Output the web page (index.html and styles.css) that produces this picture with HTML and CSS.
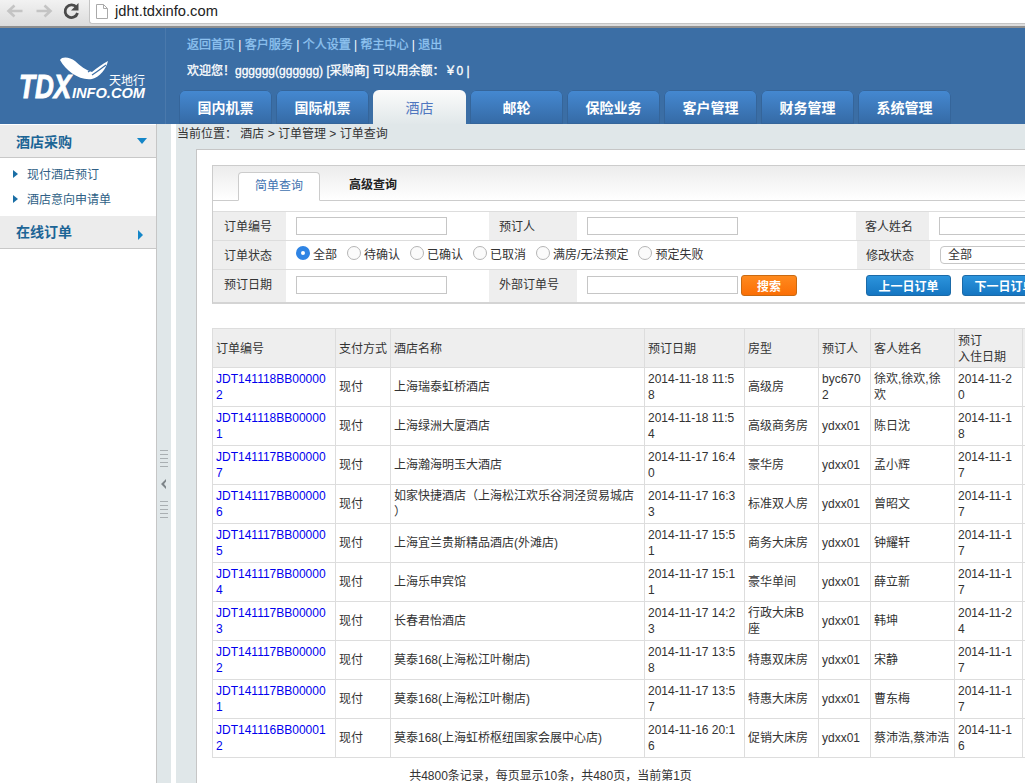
FILE: index.html
```html
<!doctype html>
<html>
<head>
  <meta charset="utf-8">
  <title>jdht.tdxinfo.com</title>
  <link rel="stylesheet" href="styles.css">
</head>

<body>

  <div class="browserBar">
    <svg class="navIcons" width="88" height="26" viewBox="0 0 88 26">
      <path d="M22 11H9M14 5.500L8 11l6 5.500" fill="none" stroke="#c4c4c4" stroke-width="2.600"/>
      <path d="M36 11h13M44 5.500l6 5.500-6 5.500" fill="none" stroke="#c4c4c4" stroke-width="2.600"/>
      <path d="M76 7.500A6.300 6.300 0 1 0 77 13" fill="none" stroke="#4a4a4a" stroke-width="2.800"/>
      <path d="M78 3v7.500h-7.500z" fill="#4a4a4a"/>
    </svg>
    <div class="addressBar">
      <svg width="12" height="15" viewBox="0 0 12 15">
        <path d="M.5.500h7l4 4v10H.500zM7.500.500v4h4" fill="#fff" stroke="#aaa"/>
      </svg>
      <span>jdht.tdxinfo.com</span>
    </div>
  </div>

  <div class="header">
    <div class="logo">
      <svg width="165" height="96" viewBox="0 0 165 96">
        <path d="M60 32C62 28 70 29 75 33 80 38 86 42 92 44 97 40 102 36 108 33 106 41 100 49 92 51 80 53 66 43 60 32z" fill="#fff"/>
        <path d="M92 47C97 44 102 40 106 37M88 44C93 41 98 37 102 35" fill="none" stroke="#3b6ea5" stroke-width="1.200"/>
        <text x="19" y="70" class="logoBig" textLength="52" lengthAdjust="spacingAndGlyphs">TDX</text>
        <text x="72" y="70" class="logoSmall" textLength="73" lengthAdjust="spacingAndGlyphs">INFO.COM</text>
        <text x="109" y="57" class="logoCn" textLength="36">天地行</text>
      </svg>
    </div>
    <div class="headerRight">
      <div class="topLinks">
        <a href="#">返回首页</a> | <a href="#">客户服务</a> | <a href="#">个人设置</a> | <a href="#">帮主中心</a> | <a href="#">退出</a>
      </div>
      <div class="welcome">欢迎您！gggggg(gggggg) [采购商] 可以用余额：￥0 |</div>
      <div class="mainTabs">
        <a class="mainTab" href="#">国内机票</a>
        <a class="mainTab" href="#">国际机票</a>
        <a class="mainTab current" href="#">酒店</a>
        <a class="mainTab" href="#">邮轮</a>
        <a class="mainTab" href="#">保险业务</a>
        <a class="mainTab" href="#">客户管理</a>
        <a class="mainTab" href="#">财务管理</a>
        <a class="mainTab" href="#">系统管理</a>
      </div>
    </div>
  </div>

  <div class="body">
    <div class="sidebar">
      <div class="sideTitle">酒店采购 <span class="arrowDown"></span></div>
      <ul class="sideList">
        <li><span class="arrowSmall"></span>现付酒店预订</li>
        <li><span class="arrowSmall"></span>酒店意向申请单</li>
      </ul>
      <div class="sideTitle second">在线订单 <span class="arrowRight"></span></div>
    </div>

    <div class="splitter">
      <span class="grip"></span>
      <svg width="6" height="10" viewBox="0 0 6 10"><path d="M5 0L0 5l5 5V7.500L3 5l2-2.500z" fill="#7d8488"/></svg>
      <span class="grip"></span>
    </div>

    <div class="content">
      <div class="breadcrumb">当前位置： 酒店 &gt; 订单管理 &gt; 订单查询</div>
      <div class="panel">

        <div class="searchForm">
          <div class="formTabs">
            <span class="formTab active">简单查询</span>
            <span class="formTab">高级查询</span>
          </div>
          <div class="formGap"></div>
          <div class="formRow">
            <label>订单编号</label>
            <div class="field"><input type="text"></div>
            <label class="wide">预订人</label>
            <div class="field long"><input type="text"></div>
            <label class="end">客人姓名</label>
            <div class="field"><input type="text"></div>
          </div>
          <div class="formRow">
            <label>订单状态</label>
            <div class="radios">
              <span class="radio on"></span><span class="radioText">全部</span>
              <span class="radio"></span><span class="radioText">待确认</span>
              <span class="radio"></span><span class="radioText">已确认</span>
              <span class="radio"></span><span class="radioText">已取消</span>
              <span class="radio"></span><span class="radioText">满房/无法预定</span>
              <span class="radio"></span><span class="radioText">预定失败</span>
            </div>
            <label class="end">修改状态</label>
            <div class="field"><span class="selectBox">全部</span></div>
          </div>
          <div class="formRow last">
            <label>预订日期</label>
            <div class="field"><input type="text"></div>
            <label class="wide">外部订单号</label>
            <div class="field long actions">
              <input type="text">
              <button class="btnSearch">搜索</button>
              <button class="btnDay">上一日订单</button>
              <button class="btnDay">下一日订单</button>
            </div>
          </div>
        </div>

        <table class="orders">
          <colgroup>
            <col class="c1"><col class="c2"><col class="c3"><col class="c4"><col class="c5">
            <col class="c6"><col class="c7"><col class="c8"><col class="c9">
          </colgroup>
          <tr>
            <th>订单编号</th><th>支付方式</th><th>酒店名称</th><th>预订日期</th><th>房型</th><th>预订人</th><th>客人姓名</th><th>预订<br>入住日期</th><th></th>
          </tr>
          <tr>
            <td><a href="#">JDT141118BB000002</a></td><td>现付</td><td>上海瑞泰虹桥酒店</td><td>2014-11-18 11:58</td><td>高级房</td><td>byc6702</td><td>徐欢,徐欢,徐欢</td><td>2014-11-20</td><td></td>
          </tr>
          <tr>
            <td><a href="#">JDT141118BB000001</a></td><td>现付</td><td>上海绿洲大厦酒店</td><td>2014-11-18 11:54</td><td>高级商务房</td><td>ydxx01</td><td>陈日沈</td><td>2014-11-18</td><td></td>
          </tr>
          <tr>
            <td><a href="#">JDT141117BB000007</a></td><td>现付</td><td>上海瀚海明玉大酒店</td><td>2014-11-17 16:40</td><td>豪华房</td><td>ydxx01</td><td>孟小辉</td><td>2014-11-17</td><td></td>
          </tr>
          <tr>
            <td><a href="#">JDT141117BB000006</a></td><td>现付</td><td>如家快捷酒店（上海松江欢乐谷洞泾贸易城店）</td><td>2014-11-17 16:33</td><td>标准双人房</td><td>ydxx01</td><td>曾昭文</td><td>2014-11-17</td><td></td>
          </tr>
          <tr>
            <td><a href="#">JDT141117BB000005</a></td><td>现付</td><td>上海宜兰贵斯精品酒店(外滩店)</td><td>2014-11-17 15:51</td><td>商务大床房</td><td>ydxx01</td><td>钟耀轩</td><td>2014-11-17</td><td></td>
          </tr>
          <tr>
            <td><a href="#">JDT141117BB000004</a></td><td>现付</td><td>上海乐申宾馆</td><td>2014-11-17 15:11</td><td>豪华单间</td><td>ydxx01</td><td>薛立新</td><td>2014-11-17</td><td></td>
          </tr>
          <tr>
            <td><a href="#">JDT141117BB000003</a></td><td>现付</td><td>长春君怡酒店</td><td>2014-11-17 14:23</td><td>行政大床B座</td><td>ydxx01</td><td>韩坤</td><td>2014-11-24</td><td></td>
          </tr>
          <tr>
            <td><a href="#">JDT141117BB000002</a></td><td>现付</td><td>莫泰168(上海松江叶榭店)</td><td>2014-11-17 13:58</td><td>特惠双床房</td><td>ydxx01</td><td>宋静</td><td>2014-11-17</td><td></td>
          </tr>
          <tr>
            <td><a href="#">JDT141117BB000001</a></td><td>现付</td><td>莫泰168(上海松江叶榭店)</td><td>2014-11-17 13:57</td><td>特惠大床房</td><td>ydxx01</td><td>曹东梅</td><td>2014-11-17</td><td></td>
          </tr>
          <tr>
            <td><a href="#">JDT141116BB000012</a></td><td>现付</td><td>莫泰168(上海虹桥枢纽国家会展中心店)</td><td>2014-11-16 20:16</td><td>促销大床房</td><td>ydxx01</td><td>蔡沛浩,蔡沛浩</td><td>2014-11-16</td><td></td>
          </tr>
        </table>

        <div class="pager">共4800条记录，每页显示10条，共480页，当前第1页</div>
      </div>
    </div>
  </div>

</body>

</html>
```

FILE: styles.css
```css
html, body {
  margin: 0;
  height: 783px;
  overflow: hidden;
}
body {
  width: 1025px;
  background-color: #ffffff;
  color: #333333;
  font-family: "Liberation Sans", "Noto Sans CJK SC", sans-serif;
  font-size: 12px;
}

/* browser toolbar */
.browserBar {
  display: flex;
  height: 28px;
  box-sizing: border-box;
  background-image: linear-gradient(to bottom, #f2f2f2, #dcdcdc);
  border-bottom: 2px solid #8f8f8f;
}
.navIcons {
  width: 89px;
  flex: none;
}
.addressBar {
  flex: 1;
  display: flex;
  align-items: center;
  gap: 7px;
  height: 24px;
  box-sizing: border-box;
  padding: 0 0 1px 6px;
  background-color: #ffffff;
  border-left: 1px solid #c4c4c4;
  border-bottom: 1px solid #c4c4c4;
  border-bottom-left-radius: 3px;
  color: #222222;
  font-size: 14.700px;
}

/* blue header */
.header {
  display: flex;
  height: 96px;
  background-color: #3b6ea5;
}
.logo {
  width: 165px;
  flex: none;
  border-right: 1px solid #4a79ac;
}
.logoBig {
  fill: #ffffff;
  stroke: #ffffff;
  stroke-width: 1;
  font-size: 33px;
  font-weight: bold;
  font-style: italic;
}
.logoSmall {
  fill: #ffffff;
  font-size: 14px;
  font-weight: bold;
  font-style: italic;
}
.logoCn {
  fill: #ffffff;
  font-size: 12px;
}
.headerRight {
  padding-left: 13px;
  flex: 1;
}
.topLinks {
  height: 16px;
  margin-top: 9px;
  padding-left: 8px;
  line-height: 16px;
  color: #ffffff;
}
.topLinks a {
  color: #8fc3f0;
  text-decoration: none;
  -webkit-text-stroke: 0.300px #8fc3f0;
}
.welcome {
  height: 16px;
  margin-top: 10px;
  padding-left: 8px;
  line-height: 16px;
  color: #ffffff;
  -webkit-text-stroke: 0.300px #ffffff;
}
.mainTabs {
  display: flex;
  gap: 4px;
  margin-top: 11px;
}
.mainTab {
  width: 93px;
  height: 34px;
  line-height: 36px;
  text-align: center;
  color: #ffffff;
  font-size: 14px;
  font-weight: bold;
  text-decoration: none;
  border-radius: 6px 6px 0 0;
  background-image: linear-gradient(to bottom, #4589d2, #356aa5);
  box-shadow: 0 0 0 1px #35659a inset;
}
.mainTab.current {
  color: #4f76bf;
  font-weight: normal;
  background-image: linear-gradient(to bottom, #fbfbfb, #e1e8ea);
  box-shadow: none;
}

/* layout under the header */
.body {
  display: flex;
  height: 659px;
}
.sidebar {
  width: 156px;
  flex: none;
  padding-top: 1px;
  border-right: 1px solid #c6c6c6;
}
.sideTitle {
  display: flex;
  justify-content: space-between;
  align-items: center;
  height: 33px;
  box-sizing: border-box;
  padding: 0 9px 0 16px;
  background-color: #ececec;
  border-bottom: 1px solid #c8c8c8;
  color: #1c6596;
  font-size: 14px;
  font-weight: bold;
}
.sideTitle.second {
  margin-top: 5px;
  padding-right: 13px;
  padding-bottom: 2px;
}
.arrowDown {
  border-left: 5px solid transparent;
  border-right: 5px solid transparent;
  border-top: 6px solid #1486c8;
}
.arrowRight {
  margin-top: 7px;
  border-top: 5px solid transparent;
  border-bottom: 5px solid transparent;
  border-left: 5px solid #1486c8;
}
.sideList {
  margin: 0;
  padding: 3px 0 0 13px;
  list-style: none;
}
.sideList li {
  display: flex;
  align-items: center;
  height: 25px;
  color: #2f5f86;
}
.arrowSmall {
  margin-right: 9px;
  border-top: 4px solid transparent;
  border-bottom: 4px solid transparent;
  border-left: 5px solid #1a6ea5;
}
.splitter {
  width: 14px;
  flex: none;
  box-sizing: border-box;
  margin-right: 5px;
  display: flex;
  flex-direction: column;
  align-items: center;
  justify-content: center;
  gap: 12px;
  padding-top: 60px;
  background-color: #e0e7e9;
}
.grip {
  width: 8px;
  height: 17px;
  background-image: repeating-linear-gradient(to bottom, #a9afb2 0, #a9afb2 1px, #e0e7e9 1px, #e0e7e9 4px);
}
.content {
  flex: 1;
  min-width: 0;
  overflow: hidden;
  background-color: #e0e7e9;
}
.breadcrumb {
  height: 25px;
  line-height: 20px;
  padding-left: 1px;
  white-space: nowrap;
}
.panel {
  width: 900px;
  height: 640px;
  margin-left: 20px;
  padding: 15px 0 0 15px;
  background-color: #ffffff;
  border-left: 1px solid #c6c6c6;
  border-top: 1px solid #c6c6c6;
}

/* search form */
.searchForm {
  width: 885px;
  border: 1px solid #cccccc;
  border-right: none;
  border-bottom: 2px solid #d4d4d4;
}
.formTabs {
  display: flex;
  align-items: flex-end;
  height: 34px;
  padding-left: 25px;
  background-image: linear-gradient(to bottom, #ececec, #ffffff);
  border-bottom: 1px solid #cccccc;
}
.formTab {
  width: 82px;
  height: 29px;
  margin-bottom: -1px;
  margin-right: 12px;
  line-height: 27px;
  text-align: center;
  color: #222222;
  font-weight: bold;
}
.formTab.active {
  box-sizing: border-box;
  background-color: #ffffff;
  border: 1px solid #cccccc;
  border-bottom-color: #ffffff;
  border-radius: 4px 4px 0 0;
  color: #3f72b0;
  font-weight: normal;
}
.formGap {
  height: 10px;
}
.formRow {
  display: flex;
  height: 28px;
  border-top: 1px solid #dddddd;
}
.formRow.last {
  height: 32px;
}
.formRow label {
  width: 73px;
  flex: none;
  box-sizing: border-box;
  padding-left: 11px;
  line-height: 30px;
  background-color: #eeeeee;
}
.formRow label.wide {
  width: 88px;
  padding-left: 10px;
}
.formRow label.end {
  padding-left: 9px;
}
.field {
  width: 203px;
  flex: none;
  box-sizing: border-box;
  padding: 5px 0 0 10px;
}
.formRow.last .field {
  padding-top: 6px;
}
.field.long {
  width: 279px;
}
.field input {
  display: block;
  width: 151px;
  height: 18px;
  box-sizing: border-box;
  margin: 0;
  padding: 0;
  border: 1px solid #c6c6c6;
  background-color: #ffffff;
}
.field.actions {
  display: flex;
  align-items: flex-start;
  width: 600px;
}
.actions input {
  flex: none;
}
.btnSearch, .btnDay {
  height: 21px;
  flex: none;
  box-sizing: border-box;
  margin: -1px 0 0 3px;
  padding: 0;
  color: #ffffff;
  font-family: inherit;
  font-size: 12px;
  font-weight: bold;
  border-radius: 3px;
}
.btnSearch {
  width: 56px;
  border: 1px solid #c96a12;
  background-image: linear-gradient(to bottom, #ff8a1e, #fb6f06);
}
.btnDay {
  width: 85px;
  margin-left: 11px;
  border: 1px solid #1b6aa8;
  background-image: linear-gradient(to bottom, #2c94dc, #1576c2);
}
.btnSearch + .btnDay {
  margin-left: 69px;
}
.radios {
  width: 571px;
  flex: none;
  box-sizing: border-box;
  display: flex;
  align-items: center;
  padding: 0 0 4px 10px;
}
.radio {
  width: 14px;
  height: 14px;
  flex: none;
  box-sizing: border-box;
  margin-right: 3px;
  border: 1px solid #b5b5b5;
  border-radius: 50%;
  background-color: #fbfbfb;
}
.radio.on {
  border: 5px solid #2f84e4;
  background-color: #ffffff;
}
.radioText {
  margin-right: 10px;
}
.selectBox {
  display: block;
  width: 150px;
  height: 18px;
  box-sizing: border-box;
  padding-left: 7px;
  line-height: 17px;
  border: 1px solid #c6c6c6;
  border-radius: 4px;
}

/* orders table */
.orders {
  width: 870px;
  margin-top: 24px;
  table-layout: fixed;
  border-collapse: collapse;
  word-break: break-all;
  line-break: anywhere;
}
.c1 { width: 123px; }
.c2 { width: 55px; }
.c3 { width: 254px; }
.c4 { width: 100px; }
.c5 { width: 74px; }
.c6 { width: 52px; }
.c7 { width: 84px; }
.c8 { width: 68px; }
.c9 { width: 60px; }
.orders th, .orders td {
  height: 39px;
  box-sizing: border-box;
  padding: 0 4px 0 3px;
  border: 1px solid #dddddd;
  line-height: 16px;
  text-align: left;
  font-weight: normal;
}
.orders th {
  padding-top: 1px;
  white-space: nowrap;
  background-color: #eeeeee;
}
.orders a {
  color: #0000ee;
  text-decoration: none;
}
.pager {
  width: 677px;
  margin-top: 10px;
  line-height: 16px;
  text-align: center;
  white-space: nowrap;
}
```
